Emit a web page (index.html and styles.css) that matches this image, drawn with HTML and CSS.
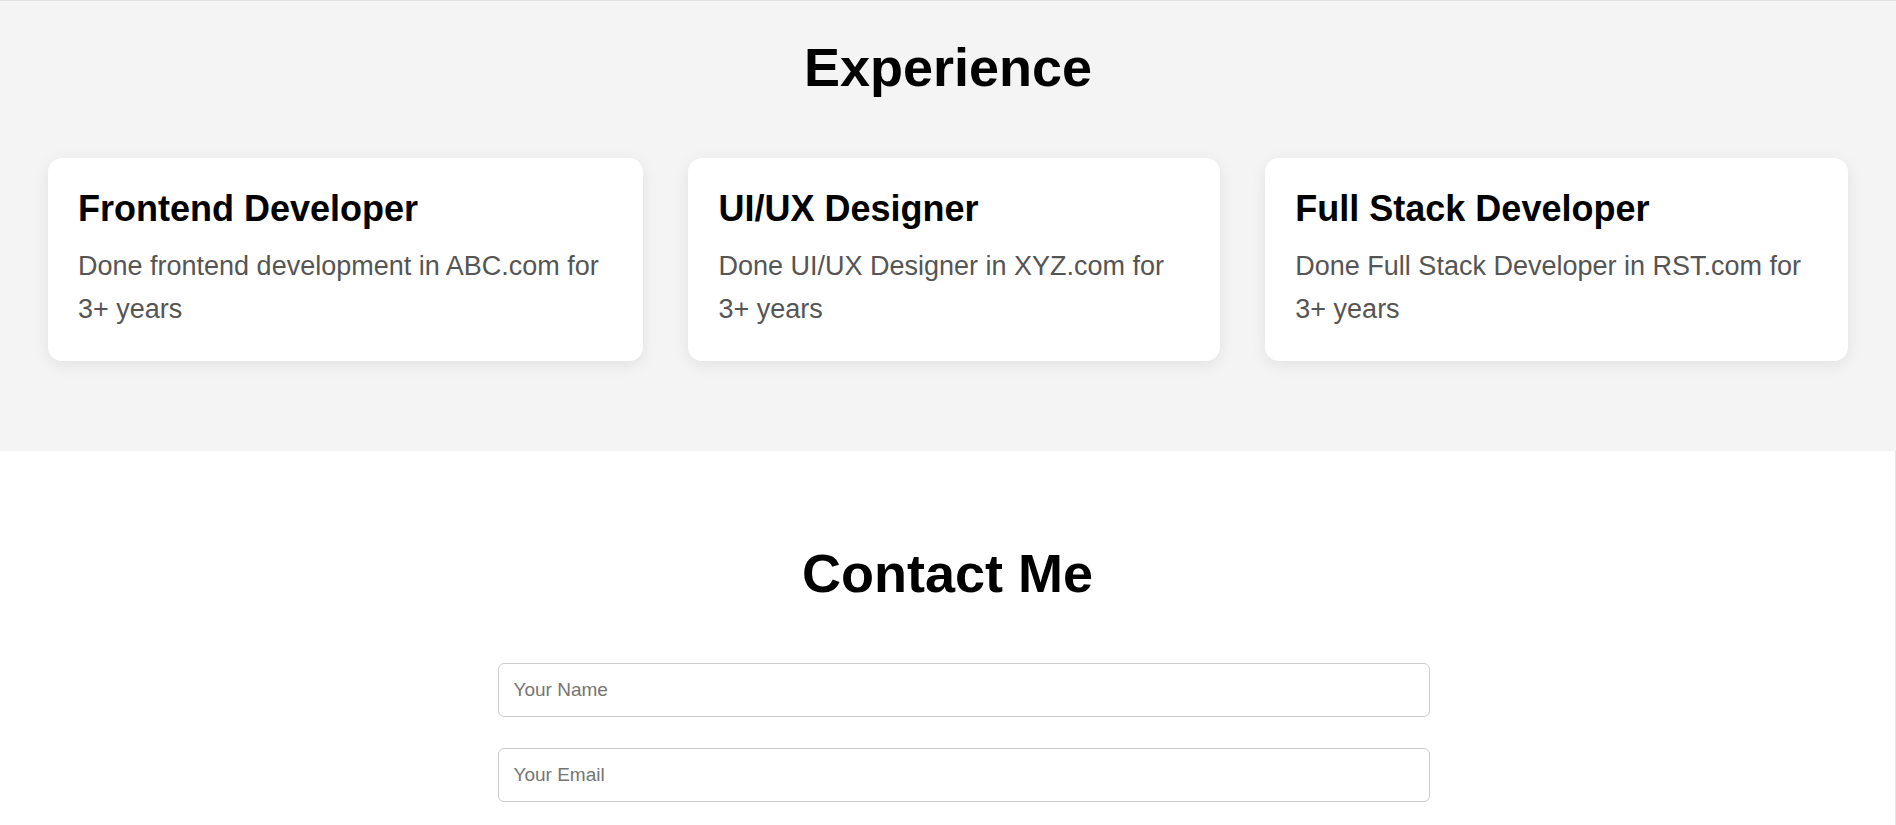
FILE: index.html
```html
<!DOCTYPE html>
<html lang="en">
<head>
<meta charset="utf-8">
<title>Portfolio</title>
<link rel="stylesheet" href="styles.css">
</head>
<body>
<section class="experience">
  <h2 class="section-title">Experience</h2>
  <div class="cards">
    <article class="card">
      <h3 class="card-title">Frontend Developer</h3>
      <p class="card-text">Done frontend development in ABC.com for 3+ years</p>
    </article>
    <article class="card">
      <h3 class="card-title">UI/UX Designer</h3>
      <p class="card-text">Done UI/UX Designer in XYZ.com for 3+ years</p>
    </article>
    <article class="card">
      <h3 class="card-title">Full Stack Developer</h3>
      <p class="card-text">Done Full Stack Developer in RST.com for 3+ years</p>
    </article>
  </div>
</section>
<section class="contact">
  <h2 class="section-title">Contact Me</h2>
  <form class="contact-form">
    <input class="field" type="text" placeholder="Your Name">
    <input class="field" type="email" placeholder="Your Email">
    <textarea class="field" placeholder="Your Message"></textarea>
    <button class="send" type="button">Send Message</button>
  </form>
</section>
</body>
</html>
```

FILE: styles.css
```css
html, body {
  margin: 0;
  padding: 0;
}
body {
  font-family: "Liberation Sans", Arial, sans-serif;
  background: #ffffff;
  color: #000;
  border-top: 1px solid #e2e2e2;
}
.section-title {
  margin: 0;
  font-size: 54px;
  font-weight: 700;
  text-align: center;
  color: #000;
}
.experience {
  background: #f4f4f4;
  padding: 35px 48px 90px;
}
.cards {
  display: flex;
  gap: 45px;
  margin-top: 60px;
}
.card {
  flex: 1 1 auto;
  background: #fff;
  border-radius: 14px;
  padding: 30px;
  box-shadow: 0 4px 16px rgba(0, 0, 0, 0.08);
}
.card-title {
  margin: 0 0 15px;
  font-size: 36px;
  font-weight: 700;
  color: #000;
}
.card-text {
  margin: 0;
  font-size: 27px;
  line-height: 1.6;
  color: #555;
}
.contact {
  padding: 91px 0 60px;
  border-right: 1px solid #e6e6e6;
}
.contact-form {
  max-width: 900px;
  margin: 59px auto 0;
}
.field {
  display: block;
  width: 100%;
  padding: 15px;
  margin: 0 0 31px;
  border: 1px solid #cccccc;
  border-radius: 6px;
  font-family: "Liberation Sans", Arial, sans-serif;
  font-size: 19px;
  color: #333;
  background: #fff;
}
.field::placeholder {
  color: #757575;
}
textarea.field {
  height: 150px;
  resize: vertical;
}
.send {
  padding: 15px 30px;
  font-size: 19px;
  border: none;
  border-radius: 6px;
  background: #333;
  color: #fff;
}
```
